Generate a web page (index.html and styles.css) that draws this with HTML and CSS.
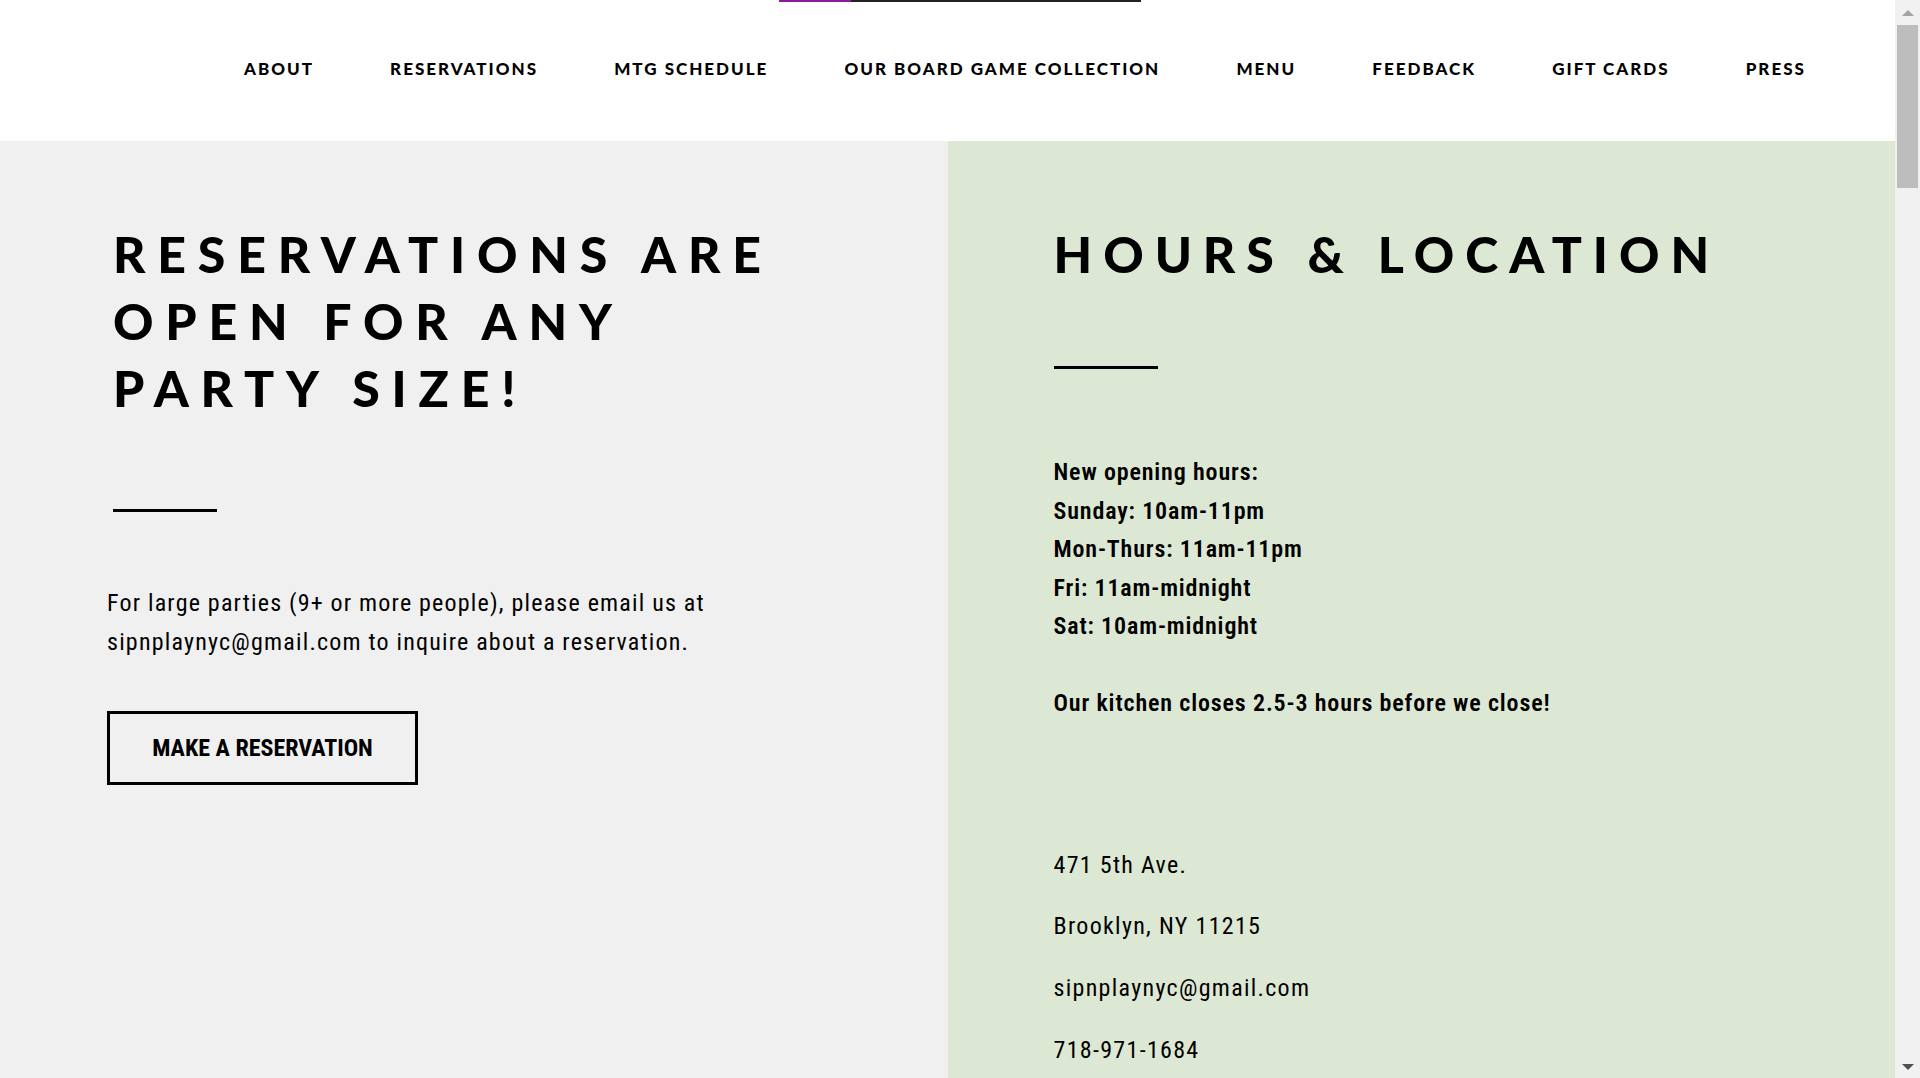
FILE: index.html
```html
<!DOCTYPE html>
<html lang="en">
<head>
<meta charset="utf-8">
<title>Reservations | Hours &amp; Location</title>
<link rel="stylesheet" href="styles.css">
</head>
<body>
<div class="page">
  <header class="site-header">
    <div class="progress"><span class="progress-fill"></span></div>
    <nav class="nav">
      <a href="#">ABOUT</a>
      <a href="#">RESERVATIONS</a>
      <a href="#">MTG SCHEDULE</a>
      <a href="#">OUR BOARD GAME COLLECTION</a>
      <a href="#">MENU</a>
      <a href="#">FEEDBACK</a>
      <a href="#">GIFT CARDS</a>
      <a href="#" class="last">PRESS</a>
    </nav>
  </header>
  <main class="split">
    <section class="panel panel-left">
      <h2 class="title title-left">RESERVATIONS ARE<br>OPEN FOR ANY<br>PARTY SIZE!</h2>
      <hr class="rule rule-left">
      <p class="copy">For large parties (9+ or more people), please email us at<br>sipnplaynyc@gmail.com to inquire about a reservation.</p>
      <a href="#" class="btn">MAKE A RESERVATION</a>
    </section>
    <section class="panel panel-right">
      <h2 class="title title-right">HOURS &amp; LOCATION</h2>
      <hr class="rule rule-right">
      <div class="hours">
        <p>New opening hours:</p>
        <p>Sunday: 10am-11pm</p>
        <p>Mon-Thurs: 11am-11pm</p>
        <p>Fri: 11am-midnight</p>
        <p>Sat: 10am-midnight</p>
        <p class="kitchen">Our kitchen closes 2.5-3 hours before we close!</p>
      </div>
      <div class="address">
        <p>471 5th Ave.</p>
        <p>Brooklyn, NY 11215</p>
        <p>sipnplaynyc@gmail.com</p>
        <p>718-971-1684</p>
      </div>
    </section>
  </main>
</div>
<aside class="scrollbar" aria-hidden="true">
  <span class="sb-btn sb-up"></span>
  <span class="sb-track"><span class="sb-thumb"></span></span>
  <span class="sb-btn sb-down"></span>
</aside>
</body>
</html>
```
FILE: styles.css
```css
body {
  margin: 0;
  height: 100vh;
  overflow: hidden;
  display: flex;
  background: #fff;
  color: #000;
}

.page {
  flex: 1;
  min-width: 0;
  display: flex;
  flex-direction: column;
}

/* scrollbar strip */
.scrollbar {
  flex: none;
  width: 25px;
  height: 100vh;
  background: #f1f1f1;
  display: flex;
  flex-direction: column;
}
.sb-btn { flex: none; height: 25px; display: flex; justify-content: center; }
.sb-up::before {
  content: "";
  margin-top: 10px;
  border-left: 6px solid transparent;
  border-right: 6px solid transparent;
  border-bottom: 6px solid #a3a3a3;
  height: 0;
}
.sb-down::before {
  content: "";
  margin-top: 11px;
  border-left: 6px solid transparent;
  border-right: 6px solid transparent;
  border-top: 6px solid #505050;
  height: 0;
}
.sb-track { flex: 1; padding: 0 2px; }
.sb-thumb { display: block; height: 163px; background: #bdbdbd; }

/* header */
.site-header { background: #fff; height: 141px; flex: none; }
.progress { margin-left: 779px; width: 362px; height: 2px; background: #222; display: flex; }
.progress-fill { width: 72px; background: #8b1b9b; }

.nav {
  display: flex;
  justify-content: space-between;
  padding: 57px 91px 0 244px;
}
.nav a {
  font-family: Lato, "Open Sans", sans-serif;
  font-weight: 900;
  font-size: 17px;
  line-height: 20px;
  letter-spacing: 2px;
  color: #000;
  text-decoration: none;
}
.nav a.last { margin-right: -2px; }

/* split */
.split {
  flex: 1;
  display: grid;
  grid-template-columns: 1fr 1fr;
}
.panel { padding-top: 80px; }
.panel-left { background: #f0f0f0; padding-left: 107px; }
.panel-right { background: #dde8d4; padding-left: 106px; }

.title {
  margin: 0;
  font-family: Lato, "Open Sans", sans-serif;
  font-weight: 900;
  font-size: 50px;
  line-height: 67px;
  letter-spacing: 0.236em;
}
.title-left { margin-left: 6px; }
.title-right { letter-spacing: 0.219em; }

.rule {
  width: 104px;
  height: 3px;
  border: 0;
  background: #000;
  margin: 0;
}
.rule-left { margin: 87px 0 0 6px; }
.rule-right { margin-top: 78px; }

.copy, .btn, .hours, .address {
  font-family: "Roboto Condensed", "DejaVu Sans Condensed", "Open Sans", sans-serif;
  font-stretch: 75%;
  font-size: 24px;
}

.copy {
  margin: 72px 0 0;
  line-height: 39px;
  letter-spacing: 1.2px;
}

.btn {
  display: block;
  box-sizing: border-box;
  width: 311px;
  height: 74px;
  margin-top: 49px;
  border: 3px solid #000;
  font-weight: 700;
  line-height: 68px;
  letter-spacing: 0;
  text-align: center;
  color: #000;
  text-decoration: none;
}

.hours {
  margin-top: 84px;
  font-weight: 600;
  line-height: 38.5px;
  letter-spacing: 0.85px;
}
.hours p { margin: 0; }
.hours .kitchen { margin-top: 38.5px; }

.address {
  margin-top: 112px;
  line-height: 61.7px;
  letter-spacing: 1.3px;
}
.address p { margin: 0; }
```
